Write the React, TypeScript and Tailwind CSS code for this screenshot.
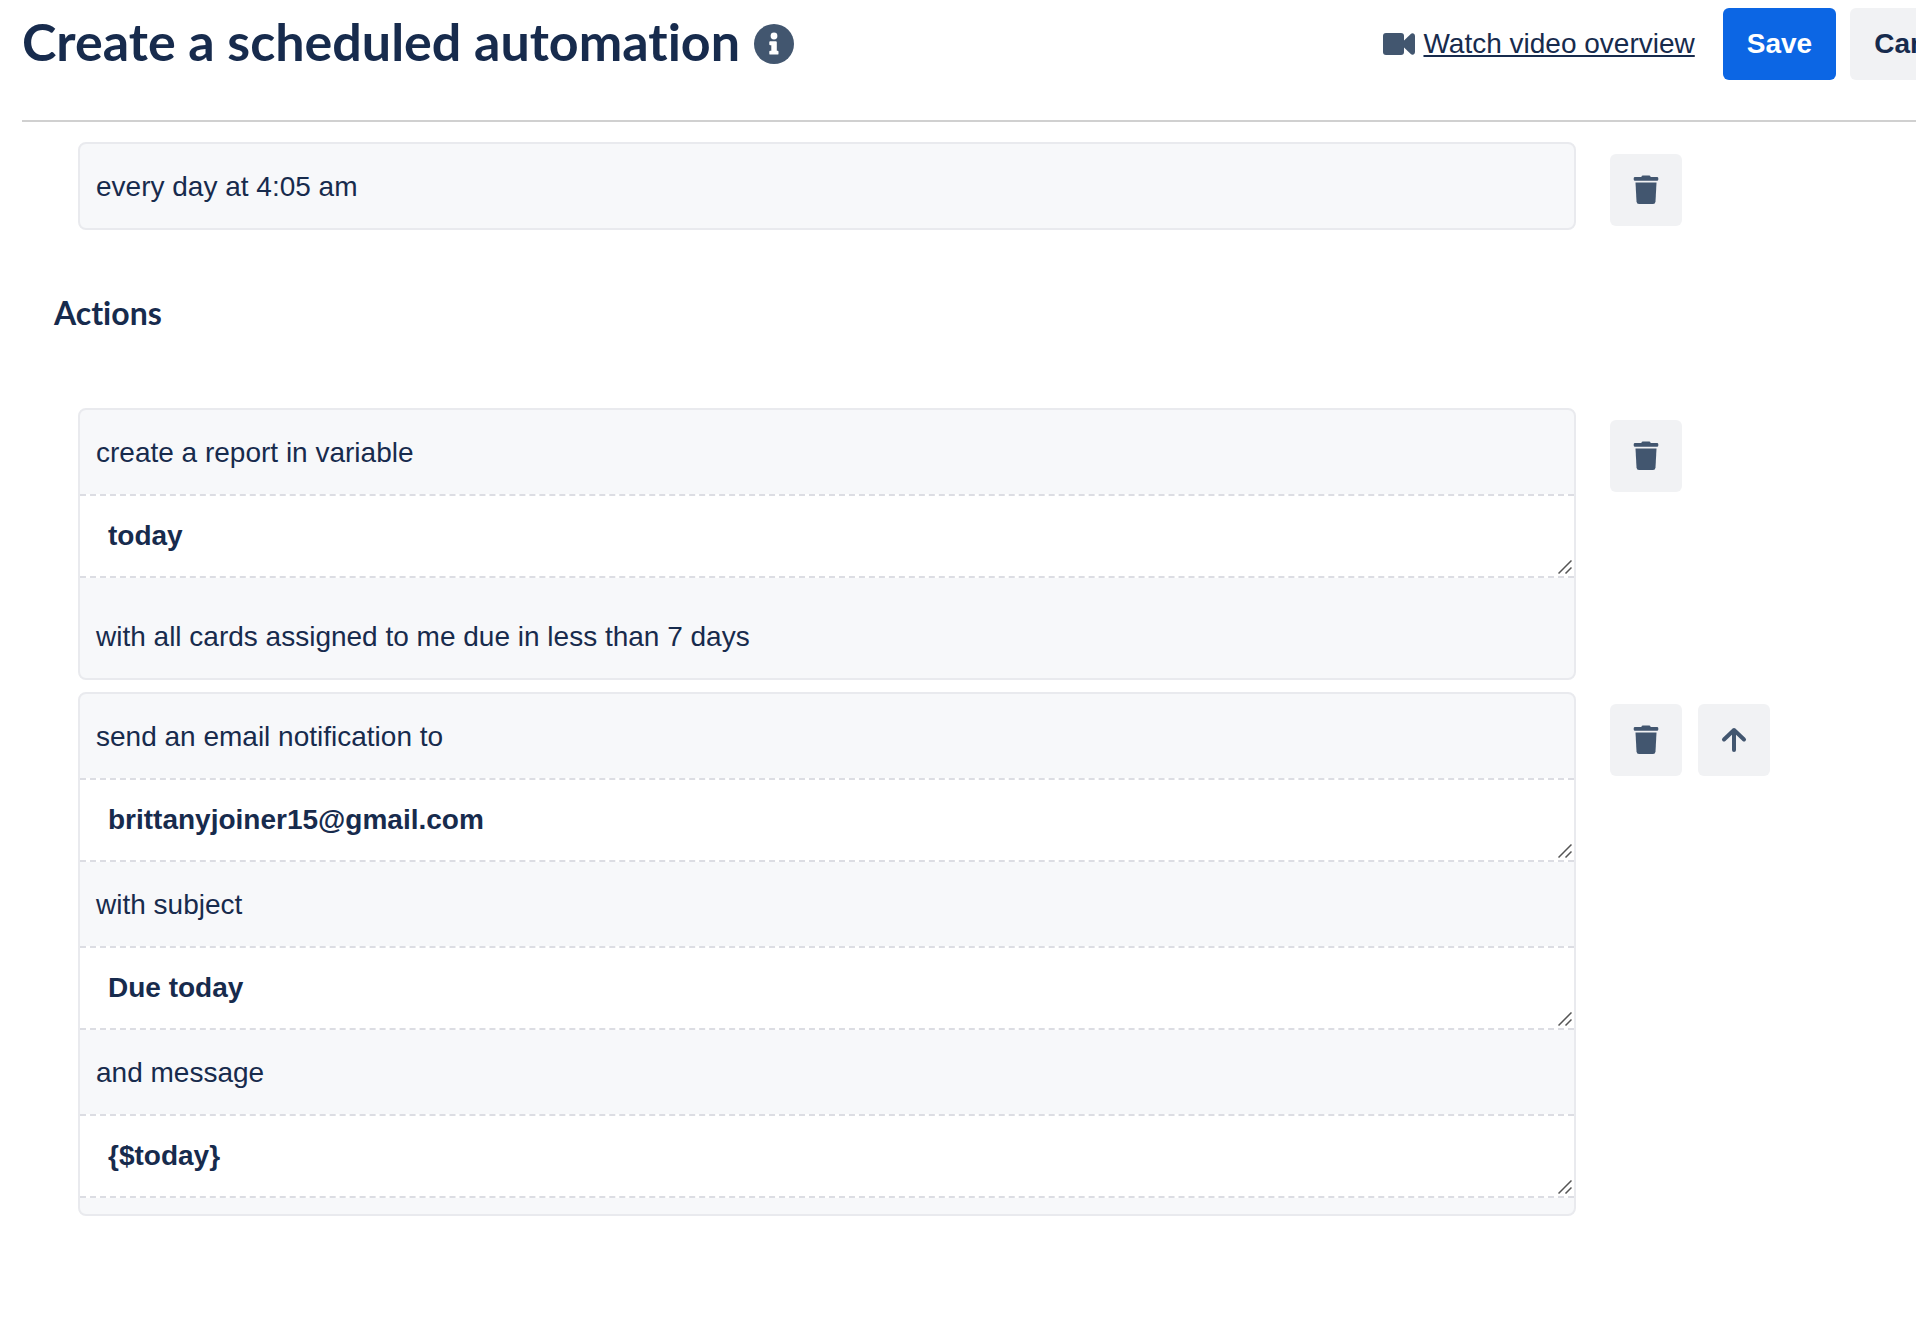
import { useState } from "react";

type Part = { label?: string; value?: string; name?: string; roomy?: boolean };

const trigger: Part[] = [{ label: "every day at 4:05 am" }];

const report: Part[] = [
	{ label: "create a report in variable", value: "today", name: "variable" },
	{ label: "with all cards assigned to me due in less than 7 days", roomy: true },
];

const email: Part[] = [
	{
		label: "send an email notification to",
		value: "brittanyjoiner15@gmail.com",
		name: "recipient",
	},
	{ label: "with subject", value: "Due today", name: "subject" },
	{ label: "and message", value: "{$today}", name: "message" },
];

function InfoIcon() {
	return (
		<svg viewBox="0 0 40 40" className="h-10 w-10" fill="#42566f" aria-hidden="true">
			<circle cx="20" cy="20" r="20" />
			<circle cx="20" cy="12" r="3.4" fill="#fff" />
			<path
				fill="#fff"
				d="M16.200 17.200h5.600q1 0 1 1v8.600h.8q.9 0 .9.900v2q0 .9-.9.900h-7.400q-.9 0-.9-.9v-2q0-.9.900-.900h1.100v-5.600h-1.100q-.9 0-.9-.900v-2.200q0-.9.900-.900z"
			/>
		</svg>
	);
}

function VideoIcon() {
	return (
		<svg viewBox="0 0 32 22" className="h-[22px] w-8" fill="#42566f" aria-hidden="true">
			<path d="M3 0h15q3 0 3 3v16q0 3-3 3H3q-3 0-3-3V3q0-3 3-3z" />
			<path d="M20 8.500l7.500-7.300Q29-.2 30.500.5 32 1.200 32 3v16q0 1.800-1.500 2.500-1.500.7-3-.7L20 13.500z" />
		</svg>
	);
}

function TrashIcon() {
	return (
		<svg viewBox="0 0 26 30" className="h-[30px] w-[26px]" fill="#42566f" aria-hidden="true">
			<path d="M8.500 1.600q.2-1.200 1.400-1.200h6.200q1.200 0 1.400 1.200l.1.400H24q1.300 0 1.300 1.200v1.400q0 1.200-1.300 1.200H2Q.7 5.800.7 4.600V3.200Q.7 2 2 2h6.400z" />
			<path d="M2.500 7.400h21l-1 19q-.2 2.600-2.500 2.600H6q-2.300 0-2.500-2.600z" />
		</svg>
	);
}

function ArrowUpIcon() {
	return (
		<svg
			viewBox="0 0 26 26"
			className="h-[26px] w-[26px]"
			fill="none"
			stroke="#42566f"
			strokeWidth="4"
			strokeLinecap="round"
			strokeLinejoin="round"
			aria-hidden="true"
		>
			<path d="M13 23V3M3 12.500L13 3l10 9.500" />
		</svg>
	);
}

function IconButton({ label, children }: { label: string; children: React.ReactNode }) {
	return (
		<button
			type="button"
			aria-label={label}
			className="flex h-18 w-18 items-center justify-center rounded-md bg-[#f1f2f4]"
		>
			{children}
		</button>
	);
}

function Field({ name, initial }: { name: string; initial: string }) {
	const [value, setValue] = useState(initial);

	return (
		<div className="relative border-y-2 border-dashed border-[#dcdde3] bg-white">
			<textarea
				id={name}
				rows={1}
				value={value}
				onChange={(e) => setValue(e.target.value)}
				className="block h-20 w-full resize-none overflow-hidden px-7 py-5 font-bold outline-none"
			/>
			<svg
				viewBox="0 0 14 14"
				className="pointer-events-none absolute right-0.5 bottom-0.5 h-3.5 w-3.5"
				stroke="#555"
				strokeWidth="1.500"
				aria-hidden="true"
			>
				<path d="M0.500 13.500L13.500 0.500M7.500 13.500L13.500 7.500" />
			</svg>
		</div>
	);
}

function Rule({ parts, movable = false }: { parts: Part[]; movable?: boolean }) {
	const endsWithField = parts[parts.length - 1].value !== undefined;

	return (
		<div className="flex items-start">
			<div
				className={`min-w-0 flex-1 overflow-hidden rounded-lg border-2 border-[#e9eaee] bg-[#f7f8fa] ${
					endsWithField ? "pb-4" : ""
				}`}
			>
				{parts.map((part) => (
					<div key={part.label}>
						{part.name ? (
							<label htmlFor={part.name} className="block px-4 pt-[23px] pb-[21px]">
								{part.label}
							</label>
						) : (
							<p className={`px-4 pb-[21px] ${part.roomy ? "pt-[39px]" : "pt-[23px]"}`}>
								{part.label}
							</p>
						)}
						{part.name && part.value && <Field name={part.name} initial={part.value} />}
					</div>
				))}
			</div>
			<div className="flex w-[340px] shrink-0 gap-4 pt-3 pl-[34px]">
				<IconButton label="Delete">
					<TrashIcon />
				</IconButton>
				{movable && (
					<IconButton label="Move up">
						<ArrowUpIcon />
					</IconButton>
				)}
			</div>
		</div>
	);
}

export default function App() {
	return (
		<main className="min-h-screen overflow-hidden bg-white pb-8 font-['Liberation_Sans',Arial,sans-serif] text-[28px] leading-10 text-[#172b4d]">
			<header className="ml-[22px] border-b-2 border-[#d0d0d0] pt-2 pb-10">
				<div className="-mr-[74px] flex items-center whitespace-nowrap">
					<h1 className="pb-1.5 font-[Lato,sans-serif] text-[52px] leading-[64px] font-bold [font-variant-ligatures:none]">
						Create a scheduled automation
					</h1>
					<button type="button" aria-label="About scheduled automations" className="ml-3.5">
						<InfoIcon />
					</button>
					<div className="ml-auto flex items-center gap-2">
						<VideoIcon />
						<a href="#video" className="underline decoration-2 underline-offset-2">
							Watch video overview
						</a>
					</div>
					<button
						type="button"
						className="ml-7 h-18 rounded-md bg-[#0c66e4] px-6 font-bold text-white"
					>
						Save
					</button>
					<button type="button" className="ml-3.5 h-18 rounded-md bg-[#f1f2f4] px-6 font-bold">
						Cancel
					</button>
				</div>
			</header>

			<section className="mt-5 ml-[78px]">
				<Rule parts={trigger} />
			</section>

			<h2 className="mt-[63px] ml-[54px] font-[Lato,sans-serif] text-[32px] font-bold [font-variant-ligatures:none]">
				Actions
			</h2>

			<section className="mt-[75px] ml-[78px] flex flex-col gap-3">
				<Rule parts={report} />
				<Rule parts={email} movable />
			</section>
		</main>
	);
}
